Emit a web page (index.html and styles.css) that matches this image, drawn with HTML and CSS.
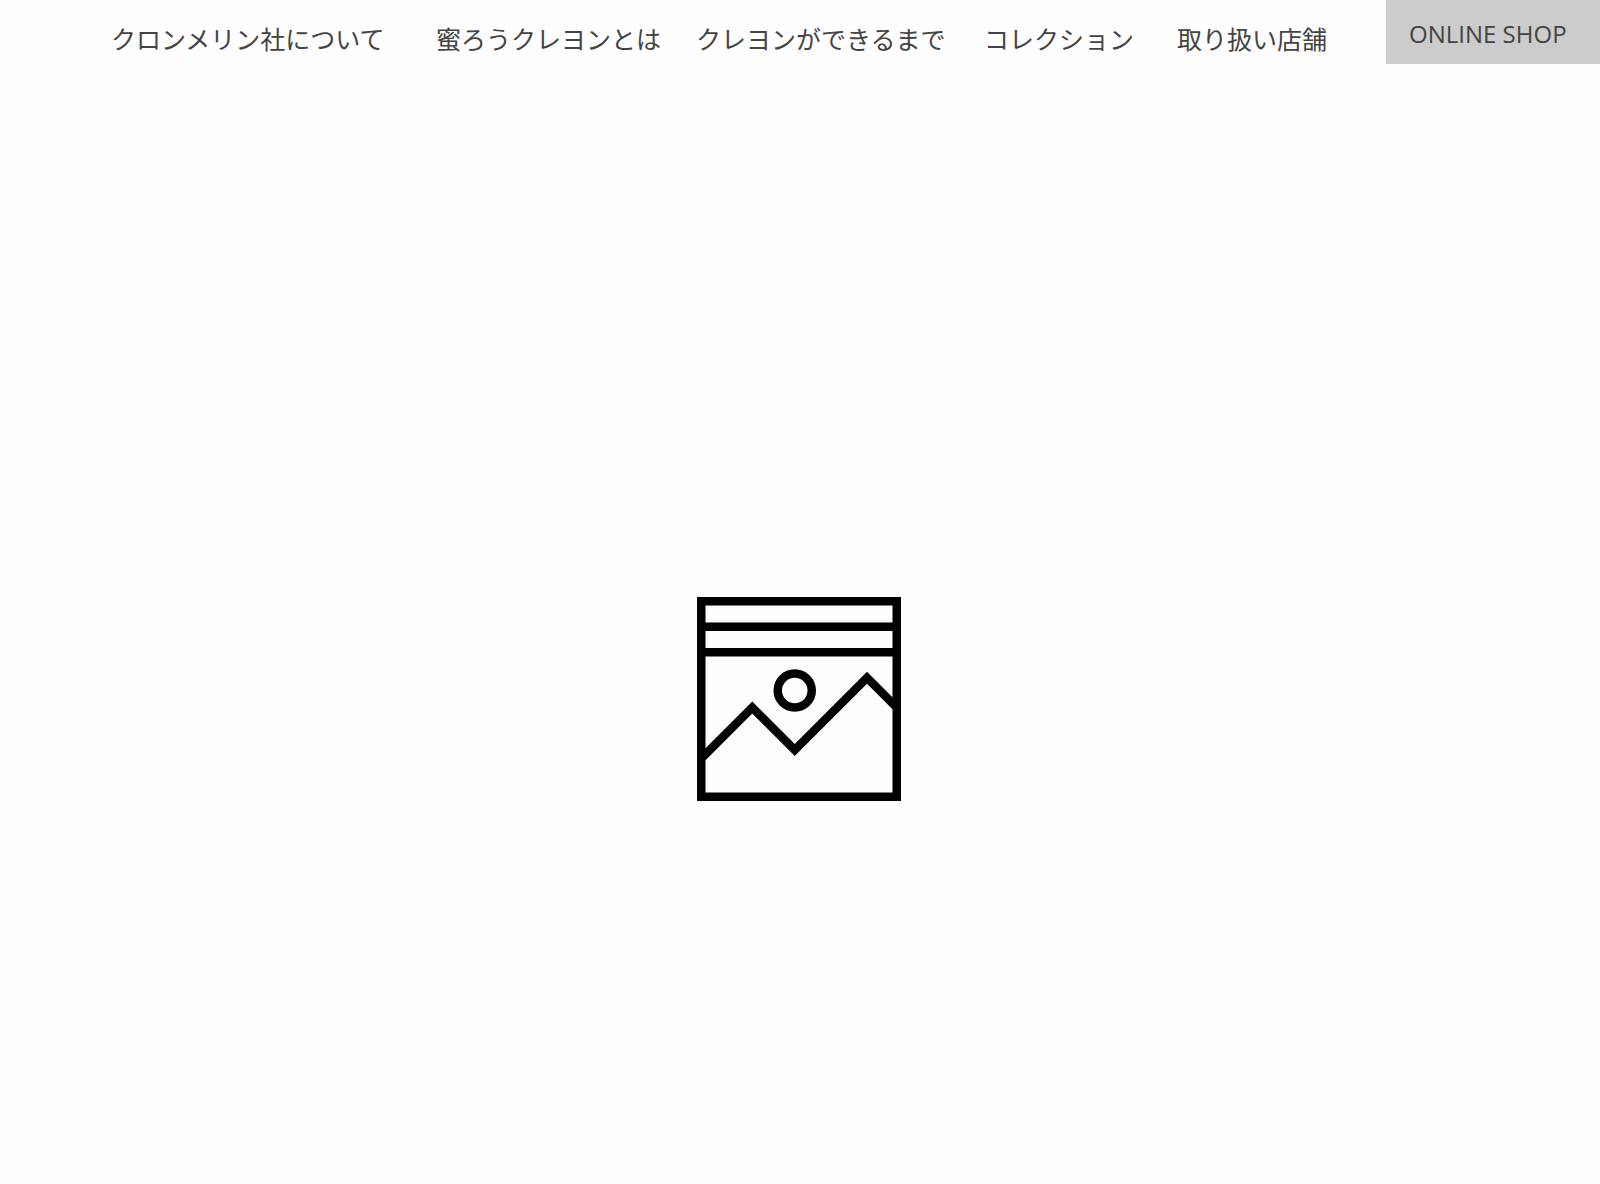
FILE: index.html
```html
<!DOCTYPE html>
<html lang="ja">
<head>
<meta charset="utf-8">
<title>クロンメリン社</title>
<link rel="stylesheet" href="styles.css">
</head>
<body>
<header>
  <nav class="nav">
    <a class="nav-link" href="#about">クロンメリン社について</a>
    <a class="nav-link" href="#beeswax">蜜ろうクレヨンとは</a>
    <a class="nav-link" href="#making">クレヨンができるまで</a>
    <a class="nav-link" href="#collection">コレクション</a>
    <a class="nav-link" href="#stores">取り扱い店舗</a>
    <a class="shop-link" href="#shop">ONLINE SHOP</a>
  </nav>
</header>
<main class="hero">
  <svg class="hero-icon" viewBox="0 0 24 24" fill="none" stroke="currentColor" role="img" aria-label="スライド画像">
    <rect x=".5" y=".5" width="23" height="23"/>
    <path d="M.5 3.5h23M.5 6.5h23M.5 19l6-6 5 5L20 9.5l3.5 3.5"/>
    <circle cx="11.5" cy="11" r="2"/>
  </svg>
</main>
</body>
</html>
```
FILE: styles.css
```css
* {
  box-sizing: border-box;
}

body {
  margin: 0;
  min-height: 100vh;
  display: flex;
  flex-direction: column;
  background: #fefefe;
  color: #444;
  font-family: "Open Sans", "Noto Sans CJK JP", sans-serif;
}

.nav {
  display: grid;
  grid-template-columns: 325fr 260fr 288fr 193fr 209fr 214fr;
  padding-left: 111px;
}

.nav a {
  color: inherit;
  text-decoration: none;
  white-space: nowrap;
}

.nav-link {
  padding-top: 8px;
  font-family: "Noto Sans CJK JP", sans-serif;
  font-size: 25px;
  line-height: 60px;
}

.shop-link {
  height: 64px;
  padding: 4px 23px 0;
  background: #ccc;
  font-size: 24px;
  line-height: 60px;
}

.hero {
  flex: 1;
  display: flex;
  align-items: center;
  justify-content: center;
  padding: 146px 3px 0 0;
}

.hero-icon {
  width: 204px;
  height: 204px;
  color: #000;
}
```
